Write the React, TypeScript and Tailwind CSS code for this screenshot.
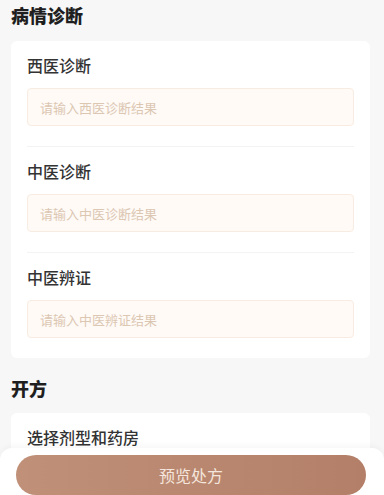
import React from 'react';

interface DiagnosisField {
  label: string;
  placeholder: string;
}

const fields: DiagnosisField[] = [
  { label: '西医诊断', placeholder: '请输入西医诊断结果' },
  { label: '中医诊断', placeholder: '请输入中医诊断结果' },
  { label: '中医辨证', placeholder: '请输入中医辨证结果' },
];

const font = { fontFamily: '"Noto Sans CJK SC", "Noto Sans", sans-serif' };

const App: React.FC = () => {
  return (
    <div className="min-h-screen bg-[#f7f7f7] pb-[36px]" style={font}>
      <h3 className="px-[11px] pt-[2px] text-[18px] font-black leading-[26px] text-[#1f1f1f]">病情诊断</h3>
      <div className="ml-[11px] mr-[14px] mt-[13px] rounded-[6px] bg-white px-[16px]">
        {fields.map((field, index) => (
          <div
            key={index}
            className={
              index < fields.length - 1
                ? 'border-b border-[#f3f3f3] pt-[12px] pb-[20px]'
                : 'pt-[12px] pb-[20px]'
            }
          >
            <p className="text-[16px] font-medium leading-[24px] text-[#333333]">{field.label}</p>
            <input
              className="mt-[11px] block h-[38px] w-full rounded-[4px] border border-[#f8ece2] bg-[#fffaf6] px-[12px] text-[13px] text-[#333333] outline-none placeholder:text-[#dcc7b3]"
              placeholder={field.placeholder}
            />
          </div>
        ))}
      </div>

      <h3 className="mt-[17px] px-[11px] text-[18px] font-black leading-[26px] text-[#1f1f1f]">开方</h3>
      <div className="ml-[11px] mr-[14px] mt-[12px] rounded-[6px] bg-white px-[16px] pt-[12px] pb-[21px]">
        <p className="text-[16px] font-medium leading-[24px] text-[#333333]">选择剂型和药房</p>
      </div>

      <div className="fixed bottom-0 left-0 right-0 rounded-t-[12px] bg-white pl-[16px] pr-[18px] pt-[7px] shadow-[0_-2px_6px_rgba(0,0,0,0.04)]">
        <button className="flex h-[40px] w-full items-center justify-center rounded-full bg-gradient-to-r from-[#c09078] to-[#b37f68] text-[16px] text-[#f5e6dd]">
          预览处方
        </button>
      </div>
    </div>
  );
};

export default App;
